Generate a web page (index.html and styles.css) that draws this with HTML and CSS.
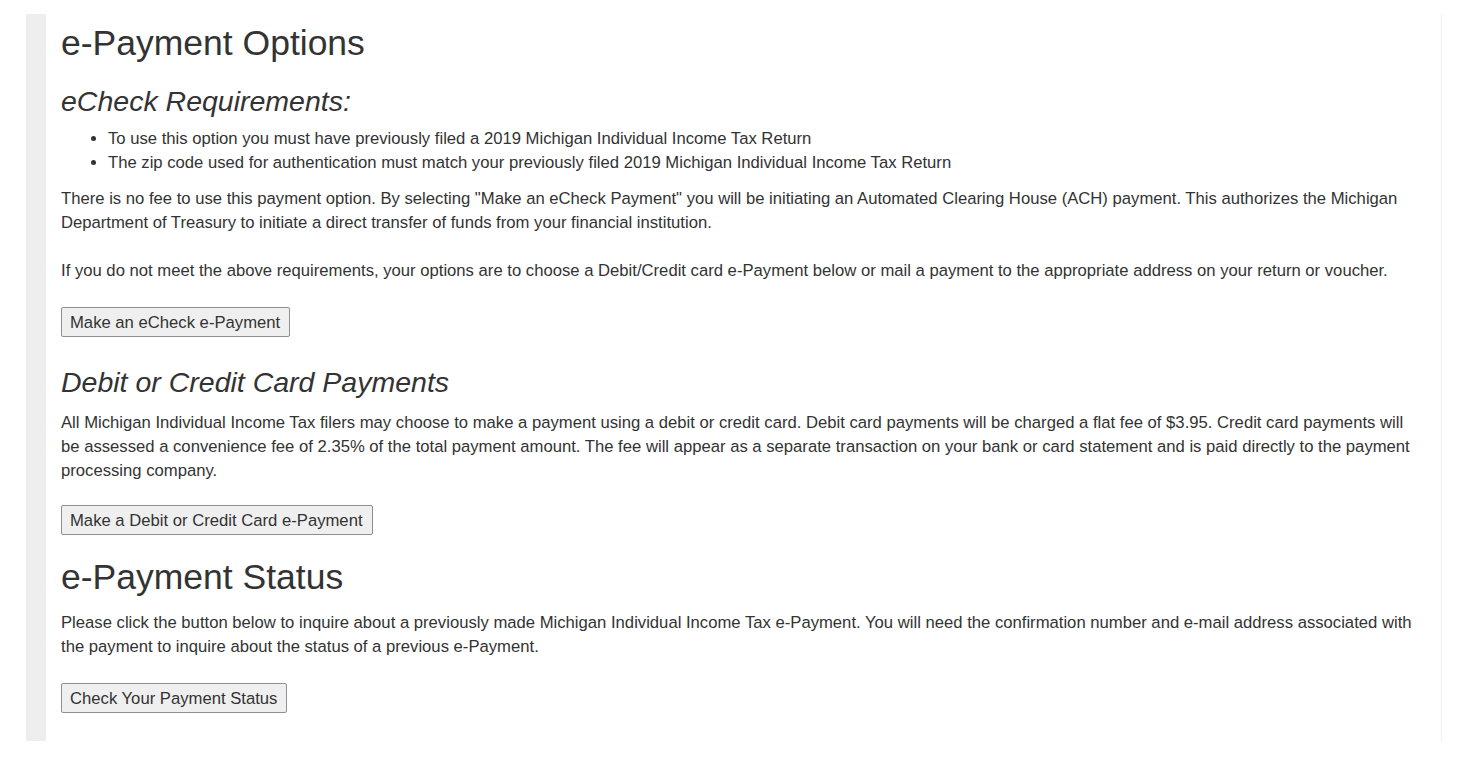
FILE: index.html
```html
<!DOCTYPE html>
<html lang="en">
<head>
<meta charset="utf-8">
<title>e-Payment Options</title>
<link rel="stylesheet" href="styles.css">
</head>
<body>
<main class="panel">
  <h1 class="page-title">e-Payment Options</h1>
  <h2 class="section-title first">eCheck Requirements:</h2>
  <ul class="req-list">
    <li>To use this option you must have previously filed a 2019 Michigan Individual Income Tax Return</li>
    <li>The zip code used for authentication must match your previously filed 2019 Michigan Individual Income Tax Return</li>
  </ul>
  <p class="text">There is no fee to use this payment option. By selecting "Make an eCheck Payment" you will be initiating an Automated Clearing House (ACH) payment. This authorizes the Michigan Department of Treasury to initiate a direct transfer of funds from your financial institution.</p>
  <p class="text">If you do not meet the above requirements, your options are to choose a Debit/Credit card e-Payment below or mail a payment to the appropriate address on your return or voucher.</p>
  <div class="actions actions-a"><button class="btn" type="button">Make an eCheck e-Payment</button></div>

  <h2 class="section-title second">Debit or Credit Card Payments</h2>
  <p class="text text-tight">All Michigan Individual Income Tax filers may choose to make a payment using a debit or credit card. Debit card payments will be charged a flat fee of $3.95. Credit card payments will be assessed a convenience fee of 2.35% of the total payment amount. The fee will appear as a separate transaction on your bank or card statement and is paid directly to the payment processing company.</p>
  <div class="actions actions-b"><button class="btn" type="button">Make a Debit or Credit Card e-Payment</button></div>

  <h1 class="page-title status">e-Payment Status</h1>
  <p class="text">Please click the button below to inquire about a previously made Michigan Individual Income Tax e-Payment. You will need the confirmation number and e-mail address associated with the payment to inquire about the status of a previous e-Payment.</p>
  <div class="actions actions-c"><button class="btn" type="button">Check Your Payment Status</button></div>
</main>
</body>
</html>
```

FILE: styles.css
```css
* { box-sizing: border-box; }

html, body {
  margin: 0;
  padding: 0;
  background: #ffffff;
}

body {
  font-family: "Liberation Sans", Arial, Helvetica, sans-serif;
  font-size: 16.67px;
  line-height: 24px;
  color: #333333;
}

.panel {
  display: block;
  margin: 14px 32px 18px 26px;
  padding: 9px 24px 28px 15px;
  border-left: 20px solid #eeeeee;
  border-right: 1px solid #efefef;
}

.page-title {
  font-size: 35.5px;
  line-height: 40px;
  font-weight: normal;
  margin: 0 0 22px;
  color: #333333;
}

.page-title.status {
  margin-bottom: 14px;
}

.section-title {
  font-size: 28.5px;
  line-height: 32px;
  font-weight: normal;
  font-style: italic;
  margin: 0;
  color: #333333;
}

.section-title.first { margin-bottom: 10px; }
.section-title.second { margin-bottom: 13px; }

.req-list {
  margin: 0 0 12px;
  padding-left: 47px;
}

.req-list li {
  line-height: 24px;
}

.text {
  margin: 0 0 24px;
}

.text.text-tight {
  margin-bottom: 22px;
}

.actions { margin: 0; }
.actions-a { margin-bottom: 29px; }
.actions-b { margin-bottom: 22px; }
.actions-c { margin-bottom: 0; }

.btn {
  font-family: "Liberation Sans", Arial, Helvetica, sans-serif;
  font-size: 16.67px;
  line-height: 20px;
  color: #333333;
  background: #efefef;
  border: 1px solid #8f8f8f;
  border-radius: 2px;
  padding: 5px 9px 3px 8px;
  margin: 0;
  cursor: pointer;
}
```
